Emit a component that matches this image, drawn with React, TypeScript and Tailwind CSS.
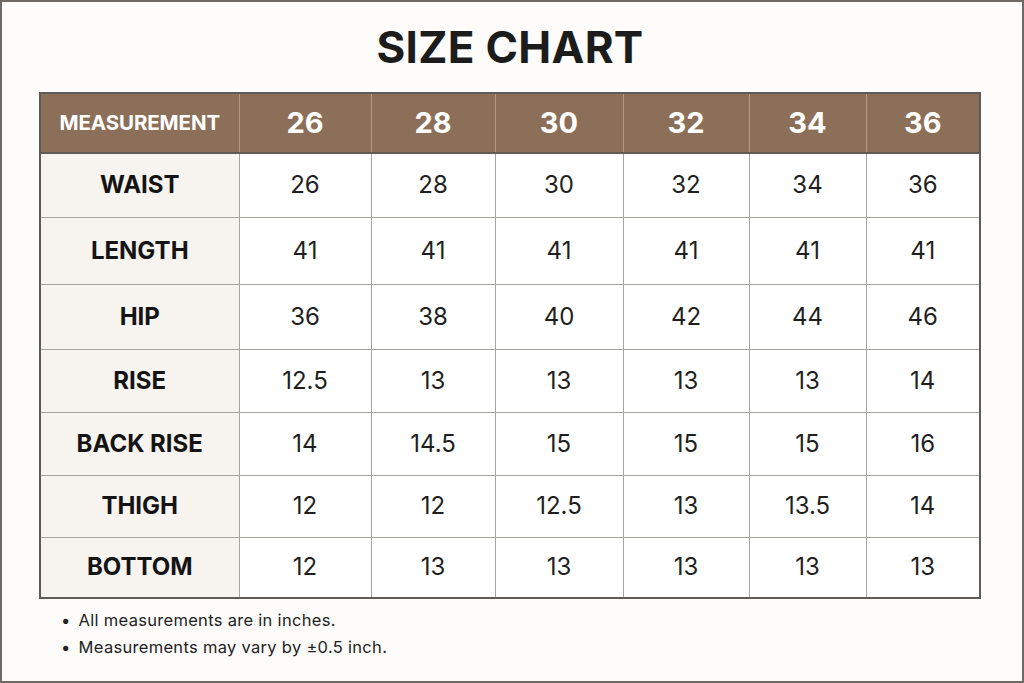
const sizes = ['26', '28', '30', '32', '34', '36'];

const rows: { label: string; values: string[] }[] = [
  { label: 'WAIST', values: ['26', '28', '30', '32', '34', '36'] },
  { label: 'LENGTH', values: ['41', '41', '41', '41', '41', '41'] },
  { label: 'HIP', values: ['36', '38', '40', '42', '44', '46'] },
  { label: 'RISE', values: ['12.5', '13', '13', '13', '13', '14'] },
  { label: 'BACK RISE', values: ['14', '14.5', '15', '15', '15', '16'] },
  { label: 'THIGH', values: ['12', '12', '12.5', '13', '13.5', '14'] },
  { label: 'BOTTOM', values: ['12', '13', '13', '13', '13', '13'] },
];

const colWidths = ['w-[199px]', 'w-[132px]', 'w-[124px]', 'w-[128px]', 'w-[126px]', 'w-[117px]', 'w-[114px]'];
const rowHeights = ['h-[64px]', 'h-[67px]', 'h-[65px]', 'h-[63px]', 'h-[63px]', 'h-[62px]', 'h-[61px]'];

export default function App() {
  return (
    <div className="w-[1024px] h-[683px] bg-[#fdfcfa] border-2 border-[#6e6964] font-['Inter',sans-serif] text-[#1a1a1a] overflow-hidden">
      {/* Title */}
      <h1 className="pt-[18px] pr-[4px] text-center text-[44px] leading-[54px] font-bold tracking-[0.3px] text-[#1c1c1c]">
        SIZE CHART
      </h1>

      {/* Table */}
      <table className="ml-[37px] mt-[18px] w-[940px] table-fixed border-collapse border-2 border-[#5f5b57]">
        <colgroup>
          {colWidths.map((w, i) => (
            <col key={i} className={w} />
          ))}
        </colgroup>
        <thead>
          <tr className="h-[60px] bg-[#8c6f58] text-white">
            <th className="border-b-2 border-r border-b-[#5f5b57] border-r-[#b29a86] text-[20.5px] font-bold tracking-[-0.1px]">
              MEASUREMENT
            </th>
            {sizes.map((s) => (
              <th
                key={s}
                className="border-b-2 border-r border-b-[#5f5b57] border-r-[#b29a86] text-[29px] font-bold"
              >
                {s}
              </th>
            ))}
          </tr>
        </thead>
        <tbody>
          {rows.map((row, ri) => (
            <tr key={row.label} className={rowHeights[ri]}>
              <td className="bg-[#f7f3ef] border border-[#a8a4a0] text-center text-[24px] font-bold text-[#141414]">
                {row.label}
              </td>
              {row.values.map((v, vi) => (
                <td
                  key={vi}
                  className="bg-white border border-[#a8a4a0] text-center text-[24px] font-normal text-[#1f1f1f]"
                >
                  {v}
                </td>
              ))}
            </tr>
          ))}
        </tbody>
      </table>

      {/* Notes */}
      <ul className="ml-[59px] mt-[8px] text-[16.5px] leading-[27px] text-[#222] tracking-[0.3px]">
        <li className="flex gap-[8px]">
          <span>•</span>
          <span>All measurements are in inches.</span>
        </li>
        <li className="flex gap-[8px]">
          <span>•</span>
          <span>Measurements may vary by ±0.5 inch.</span>
        </li>
      </ul>
    </div>
  );
}
